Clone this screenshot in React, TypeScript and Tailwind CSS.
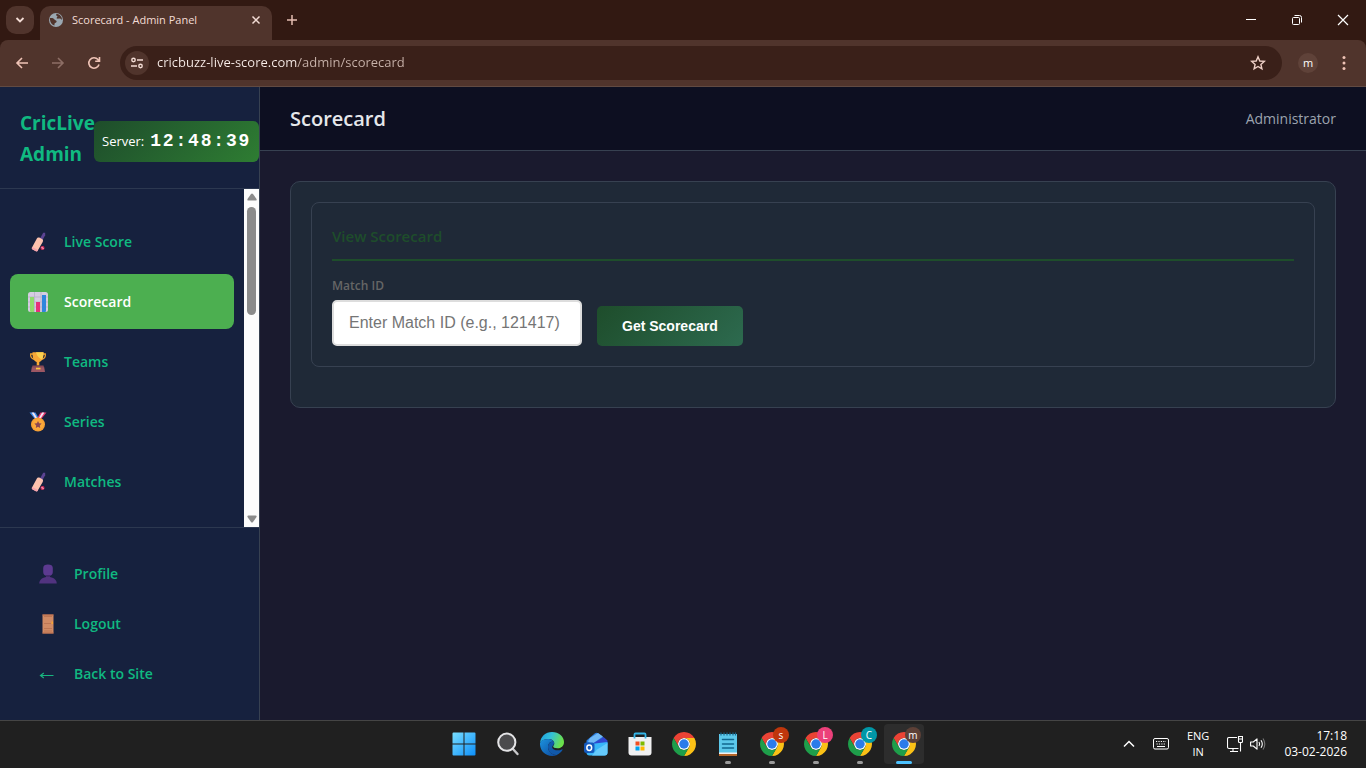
import { useState } from 'react';
import type { ReactNode } from 'react';

type NavItem = { label: string; href: string; icon: ReactNode };

const BatIcon = () => (
  <svg viewBox="0 0 20 20" className="w-5 h-5">
    <path d="M12 6.500 15.200.8h2v2.400L14.500 8z" fill="#5b4391" />
    <path d="M8.600 7c.8-1.500 2-1.800 3.200-1.200l2.200 1.200c1.200.7 1.300 1.800.7 2.900l-4.900 8.600c-.5.9-1.200 1-2 .6l-3.200-1.700c-.9-.5-1-1.200-.6-2z" fill="#fcc2ae" />
    <path d="m4.200 15 5.900 3-.4.700c-.5.8-1.200.9-2 .5l-3.100-1.700c-.9-.5-1-1.300-.4-2.500z" fill="#f6a3ad" />
    <circle cx="14.500" cy="16" r="2" fill="#d9305f" />
    <path d="m13.600 15 1.900 2" stroke="#ffd5de" strokeWidth=".9" />
  </svg>
);

const ChartIcon = () => (
  <svg viewBox="0 0 20 20" className="w-5 h-5">
    <rect width="20" height="20" rx="2.500" fill="#d5cde0" />
    <path d="M0 5h20M0 10h20M0 15h20M6.500 0v20M13 0v20" stroke="#b9afc9" strokeWidth=".8" />
    <path d="M2 5h4v15H3a1 1 0 0 1-1-1z" fill="#8fdc6c" />
    <path d="M8 10h4v10H8z" fill="#e8307a" />
    <path d="M14 3h4v16a1 1 0 0 1-1 1h-3z" fill="#2f86dd" />
  </svg>
);

const TrophyIcon = () => (
  <svg viewBox="0 0 20 20" className="w-5 h-5">
    <path d="M5.500 2H2.700c-.5 3 1 5 4 5.500M14.500 2h2.800c.5 3-1 5-4 5.500" fill="none" stroke="#f5a32c" strokeWidth="1.300" />
    <path d="M4.500.3h11c.2 5-1 8.800-4.200 9.700v3.500H8.700V10C5.500 9.100 4.300 5.300 4.500.3z" fill="#f9a836" />
    <path d="M8 .3h7.500c0 3-.5 5.500-1.500 7.200C12 6.800 9 4.800 8 .3z" fill="#fcd14f" />
    <path d="M4.500 13.500h11l.7 2.200H3.800z" fill="#8a4a55" />
    <path d="M3.800 15.200h12.400l.8 4.800H3z" fill="#9c5763" />
    <rect x="8" y="15.700" width="4.500" height="1.700" fill="#fbc441" />
  </svg>
);

const MedalIcon = () => (
  <svg viewBox="0 0 20 20" className="w-5 h-5">
    <path d="M1.500.5h6l4 7-3.500 1z" fill="#3d8de8" />
    <path d="M18.500.5h-6l-4 7 3.500 1z" fill="#e83c72" />
    <path d="M3.600.5h2.300l4.100 7-1.500.8zM16.400.5h-2.300L10 7.500l1.500.8z" fill="#f4e4f3" />
    <circle cx="10" cy="12.500" r="7" fill="#f6a035" />
    <circle cx="10" cy="12.500" r="5.400" fill="#fba93a" />
    <path d="m10 9 1.100 2.300 2.500.3-1.800 1.800.4 2.500L10 14.700l-2.200 1.200.4-2.500-1.800-1.800 2.500-.3z" fill="#8a4753" />
  </svg>
);

const PersonIcon = () => (
  <svg viewBox="0 0 20 20" className="w-5 h-5">
    <path d="M5.200 4c0-2.500 1.800-3.500 4.800-3.500s4.800 1 4.800 3.500v4c0 2.500-1.600 4-4.800 4s-4.800-1.500-4.800-4z" fill="#5c3a90" />
    <path d="M8 11h4v2.500H8z" fill="#432a6d" />
    <path d="M1.200 19.500c.3-4 3.300-6.500 8.800-6.500s8.500 2.500 8.800 6.500z" fill="#51337f" />
  </svg>
);

const DoorIcon = () => (
  <svg viewBox="0 0 20 20" className="w-5 h-5">
    <path d="M4.500.5h11v19h-11z" fill="#d18b65" />
    <path d="M4.500.5h11v1h-11zM4.500 18.500h11v1h-11z" fill="#b86a4b" />
    <path d="M6 2.500h8M6 9.500h7M6 14.500h8M6 17h8" stroke="#b56d4e" strokeWidth=".7" />
    <path d="M13.500 7.500h1.500v2.500h-1.500z" fill="#f8a432" />
  </svg>
);

const ArrowIcon = () => (
  <svg viewBox="0 0 20 20" className="w-5 h-5" fill="none" stroke="#18b57f" strokeWidth="1.200">
    <path d="M2.500 11.500h13M5.800 9 2.500 11.500 5.800 14" />
  </svg>
);

const ChromeIcon = () => (
  <svg viewBox="0 0 48 48" className="w-6 h-6">
    <circle cx="24" cy="24" r="12" fill="#fff" />
    <path d="M24 12h20.780A24 24 0 0 0 3.220 12l10.390 18A12 12 0 0 1 24 12z" fill="#ea4335" />
    <path d="M34.390 30 24 48a24 24 0 0 0 20.780-36H24a12 12 0 0 1 10.390 18z" fill="#fbc116" />
    <path d="M13.610 30 3.220 12A24 24 0 0 0 24 48l10.390-18a12 12 0 0 1-20.780 0z" fill="#1e9e4a" />
    <circle cx="24" cy="24" r="9.500" fill="#2b7bea" />
  </svg>
);

const WindowsIcon = () => (
  <svg viewBox="0 0 24 24" className="w-6 h-6">
    <defs>
      <linearGradient id="win" gradientUnits="userSpaceOnUse" x1="0" y1="0" x2="24" y2="24">
        <stop stopColor="#7be0ff" />
        <stop offset="1" stopColor="#0a8dfa" />
      </linearGradient>
    </defs>
    <path d="M.5 1.500q0-1 1-1h10v11H.5zM12.500.5h10q1 0 1 1v10h-11zM.5 12.500h11v11h-10q-1 0-1-1zM12.500 12.500h11v10q0 1-1 1h-10z" fill="url(#win)" />
  </svg>
);

const TaskSearchIcon = () => (
  <svg viewBox="0 0 24 24" className="w-6 h-6">
    <path d="m16.500 16.500 5 5.500" stroke="#c9c9cb" strokeWidth="2.400" strokeLinecap="round" />
    <circle cx="10.800" cy="10.200" r="8.600" fill="#4b4b4d" stroke="#e4e4e6" strokeWidth="2" />
  </svg>
);

const EdgeIcon = () => (
  <svg viewBox="0 0 24 24" className="w-6 h-6">
    <defs>
      <linearGradient id="edgeTop" x1="0" y1="0" x2="1" y2=".3">
        <stop stopColor="#1b9de2" />
        <stop offset=".5" stopColor="#34c1d8" />
        <stop offset="1" stopColor="#6be04b" />
      </linearGradient>
      <linearGradient id="edgeLow" x1="0" y1="0" x2="1" y2="1">
        <stop stopColor="#1c93de" />
        <stop offset="1" stopColor="#0c479d" />
      </linearGradient>
    </defs>
    <path d="M0 11C.6 4.600 5.500 0 12 0c7 0 12 4.600 12 10 0 4-3 6.300-6.500 6.300-3 0-4.500-1-4.300-2 .1-.6 1.100-1 1.100-2.800C14.300 9 12 7 8.500 7 4 7 1 9 0 11z" fill="url(#edgeTop)" />
    <path d="M0 11c1-2.500 4-4 8.500-4 3 0 4.900 1.500 5.500 3-3.500-1-6 1.500-6 5 0 4.500 4 8 9 8a12 12 0 0 1-5 1C5 24-.5 18.500 0 11z" fill="url(#edgeLow)" />
    <path d="M14 10c-3.500-1-6 1.500-6 5 0 4.500 4 8.300 8.700 8 2.600-1.200 4.600-2.800 5.800-5 .3-.6-.2-.9-.8-.6-1.200.6-2.600.9-4.200.9-4.800 0-6.500-3-4.300-5.300.7-.8 1-1.700.8-3z" fill="#1159ab" />
  </svg>
);

const OutlookIcon = () => (
  <svg viewBox="0 0 24 24" className="w-6 h-6">
    <path d="M2.500 8.500 11 1.300q1.500-1.100 3 0l8.500 7V12l-10 6-10-6z" fill="#2b7de0" />
    <path d="M6 6 14 1l5 3.600L8 12 4 9.500z" fill="#6fb8f6" />
    <path d="M9 11.500 19.500 5l4 3.500v4L13 18z" fill="#3147ce" />
    <path d="M2.500 12.500 23.500 10v10.500q0 3-3 3h-15q-3 0-3-3z" fill="#38b6f8" />
    <path d="m13 17.500 10.500-6.500v9.500q0 3-3 3H8z" fill="#65cafc" />
    <rect y="10.500" width="10.500" height="10.500" rx="2.200" fill="#1459bd" />
    <ellipse cx="5.250" cy="15.750" rx="2.400" ry="2.700" fill="none" stroke="#fff" strokeWidth="1.500" />
  </svg>
);

const StoreIcon = () => (
  <svg viewBox="0 0 24 24" className="w-6 h-6">
    <path d="M.5 5h23v15.500q0 3-3 3h-17q-3 0-3-3z" fill="#f0f0f1" />
    <path d="M6.500 6.500V2.500q0-1 1-1h9q1 0 1 1v4" fill="none" stroke="#35b6e8" strokeWidth="1.800" />
    <path d="M7.500 9.500h4v4h-4z" fill="#f25022" />
    <path d="M12.500 9.500h4v4h-4z" fill="#7fba00" />
    <path d="M7.500 14.500h4v4h-4z" fill="#00a4ef" />
    <path d="M12.500 14.500h4v4h-4z" fill="#ffb900" />
  </svg>
);

const NotepadIcon = () => (
  <svg viewBox="0 0 24 24" className="w-6 h-6">
    <path d="M3 2h18v19H3z" fill="#5cc8ea" />
    <path d="M3 20.500h18v1.500H3z" fill="#f2f2f2" />
    <path d="M3 22h18v2H3z" fill="#b5672b" />
    <path d="M5 .5v3M8 .5v3M11 .5v3M14 .5v3M17 .5v3M19.500 .5v3" stroke="#17668c" strokeWidth="1.200" />
    <path d="M6.500 7.500h11M6.500 12h11M6.500 16h11" stroke="#11678f" strokeWidth="1.500" strokeLinecap="round" />
  </svg>
);

const navItems: NavItem[] = [
  { label: 'Live Score', href: '#live-score', icon: <BatIcon /> },
  { label: 'Scorecard', href: '#scorecard', icon: <ChartIcon /> },
  { label: 'Teams', href: '#teams', icon: <TrophyIcon /> },
  { label: 'Series', href: '#series', icon: <MedalIcon /> },
  { label: 'Matches', href: '#matches', icon: <BatIcon /> },
];

const footerItems: NavItem[] = [
  { label: 'Profile', href: '#profile', icon: <PersonIcon /> },
  { label: 'Logout', href: '#logout', icon: <DoorIcon /> },
  { label: 'Back to Site', href: '#site', icon: <ArrowIcon /> },
];

type TaskApp = { name: string; icon: ReactNode; badge?: string; badgeClass?: string; running?: boolean; active?: boolean };

const taskApps: TaskApp[] = [
  { name: 'Start', icon: <WindowsIcon /> },
  { name: 'Search', icon: <TaskSearchIcon /> },
  { name: 'Edge', icon: <EdgeIcon /> },
  { name: 'Outlook', icon: <OutlookIcon /> },
  { name: 'Store', icon: <StoreIcon /> },
  { name: 'Chrome', icon: <ChromeIcon /> },
  { name: 'Notepad', icon: <NotepadIcon />, running: true },
  { name: 'Chrome s', icon: <ChromeIcon />, badge: 's', badgeClass: 'bg-[#bf360c]', running: true },
  { name: 'Chrome L', icon: <ChromeIcon />, badge: 'L', badgeClass: 'bg-[#ec407a]', running: true },
  { name: 'Chrome C', icon: <ChromeIcon />, badge: 'C', badgeClass: 'bg-[#0097a7]', running: true },
  { name: 'Chrome m', icon: <ChromeIcon />, badge: 'm', badgeClass: 'bg-[#5d4037]', running: true, active: true },
];

function BrowserBar() {
  return (
    <header className="shrink-0 bg-[#321912] text-[#f3dcd5]">
      <div className="flex h-10 items-center">
        <button aria-label="Search tabs" className="ml-1.5 flex h-7 w-7 items-center justify-center rounded-[10px] bg-[#50342c]">
          <svg viewBox="0 0 12 12" className="h-3 w-3" fill="none" stroke="currentColor" strokeWidth="1.800">
            <path d="m2.500 4 3.500 3.500L9.500 4" />
          </svg>
        </button>
        <div className="ml-1.5 flex h-[34px] w-[232px] items-center self-end rounded-t-[10px] bg-[#50342c] px-2 pb-1.5">
          <svg viewBox="0 0 16 16" className="h-4 w-4 shrink-0">
            <circle cx="8" cy="8" r="7" fill="#9aa7b1" />
            <path d="M2 6c2.500-.3 4 .3 4.500 1.500.4 1 1.500.7 2 1.600.5 1-.5 1.700-1.500 1.900-.6.300-.5 1.500-.6 2.500C3.500 12.700 1.700 9.500 2 6zM8.500 1.700C7.800 3 8 3.800 9.400 4c.2 1.300-.9 1.500-.9 2.300 1.500.9 3-.3 4.500.7l1 1c.2-3-2-6-5.500-6.300z" fill="#50342c" />
          </svg>
          <span className="ml-2 text-[11px]">Scorecard - Admin Panel</span>
          <button aria-label="Close tab" className="ml-auto flex h-4 w-4 items-center justify-center">
            <svg viewBox="0 0 10 10" className="h-2.5 w-2.5" stroke="currentColor" strokeWidth="1.500">
              <path d="m1.500 1.500 7 7m0-7-7 7" />
            </svg>
          </button>
        </div>
        <button aria-label="New tab" className="ml-3.5 text-[#e5bdb1]">
          <svg viewBox="0 0 12 12" className="h-3 w-3" stroke="currentColor" strokeWidth="1.500">
            <path d="M6 1v10M1 6h10" />
          </svg>
        </button>
        <div className="ml-auto flex text-white">
          <button aria-label="Minimize" className="flex h-10 w-[46px] items-center justify-center">
            <svg viewBox="0 0 12 12" className="h-3 w-3" stroke="currentColor">
              <path d="M1 5.500h10" />
            </svg>
          </button>
          <button aria-label="Restore" className="flex h-10 w-[46px] items-center justify-center">
            <svg viewBox="0 0 12 12" className="h-3 w-3" fill="none" stroke="currentColor">
              <rect x="1.500" y="3.500" width="7" height="7" rx="1" />
              <path d="M3.500 1.500h5q2 0 2 2v5" />
            </svg>
          </button>
          <button aria-label="Close window" className="flex h-10 w-[46px] items-center justify-center">
            <svg viewBox="0 0 12 12" className="h-3 w-3" stroke="currentColor" strokeWidth="1.200">
              <path d="m1 1 10 10m0-10L1 11" />
            </svg>
          </button>
        </div>
      </div>

      <div className="flex h-[47px] items-center rounded-t-lg border-b border-[#614a42] bg-[#50342c] px-3.5 text-[#efc3b6]">
        <button aria-label="Back">
          <svg viewBox="0 0 16 16" className="h-4 w-4" fill="none" stroke="currentColor" strokeWidth="1.600">
            <path d="M14 8H3m5-5L3 8l5 5" />
          </svg>
        </button>
        <button aria-label="Forward" className="ml-5 text-[#8d6e65]">
          <svg viewBox="0 0 16 16" className="h-4 w-4" fill="none" stroke="currentColor" strokeWidth="1.600">
            <path d="M2 8h11M8 3l5 5-5 5" />
          </svg>
        </button>
        <button aria-label="Reload" className="ml-5">
          <svg viewBox="0 0 16 16" className="h-4 w-4" fill="none" stroke="currentColor" strokeWidth="1.600">
            <path d="M13 9.500A5.200 5.200 0 1 1 12 4.600l1.300 1.400M13.500 2v4.300H9.200" />
          </svg>
        </button>
        <div className="ml-[18px] flex h-[34px] flex-1 items-center rounded-full bg-[#3a2019] pr-4 pl-[5px]">
          <button aria-label="Site information" className="flex h-6 w-6 items-center justify-center rounded-full bg-[#50342c] text-[#f3dcd5]">
            <svg viewBox="0 0 14 14" className="h-3.5 w-3.5" fill="none" stroke="currentColor" strokeWidth="1.400">
              <circle cx="3.500" cy="4" r="1.700" />
              <path d="M7 4h6M1 10h6" />
              <circle cx="10.500" cy="10" r="1.700" />
            </svg>
          </button>
          {/* the path part after the domain is dimmed */}
          <input
            aria-label="Address"
            type="text"
            defaultValue="cricbuzz-live-score.com/admin/scorecard"
            className="ml-2 min-w-0 flex-1 bg-linear-to-r from-[#faeeea] from-[140px] to-[#c9b3ab] to-[140px] bg-clip-text text-[13px] text-transparent outline-none"
          />
          <button aria-label="Bookmark this tab" className="ml-4 text-[#efd0c7]">
            <svg viewBox="0 0 16 16" className="h-4 w-4" fill="none" stroke="currentColor" strokeWidth="1.400">
              <path d="m8 1.800 1.800 4.200 4.500.4-3.400 3 1 4.500L8 11.500l-3.900 2.400 1-4.500-3.400-3 4.500-.4z" />
            </svg>
          </button>
        </div>
        <button className="ml-4 flex h-5 w-5 items-center justify-center rounded-full bg-[#5f4239] text-[11px] text-white">m</button>
        <button aria-label="Menu" className="ml-[18px]">
          <svg viewBox="0 0 16 16" className="h-4 w-4" fill="currentColor">
            <circle cx="8" cy="2.500" r="1.500" />
            <circle cx="8" cy="8" r="1.500" />
            <circle cx="8" cy="13.500" r="1.500" />
          </svg>
        </button>
      </div>
    </header>
  );
}

function Sidebar() {
  return (
    <aside className="flex w-[260px] shrink-0 flex-col border-r border-[#374151] bg-[#16213e] text-sm font-semibold text-[#10b981]">
      <div className="flex items-center border-b border-[#2c3850] pt-[21px] pb-[18px] pl-5">
        <h2 className="w-[74px] shrink-0 text-[19px] leading-[31px] font-bold">CricLive Admin</h2>
        <div className="mt-1 flex h-[41px] flex-1 items-center gap-1.5 rounded-md bg-linear-135 from-[#1e4d2b] to-[#2e7d32] pl-2 whitespace-nowrap text-white">
          <span className="text-[13px] font-normal">Server:</span>
          <span className="font-['Liberation_Mono',monospace] text-lg font-bold tracking-widest">12:48:39</span>
        </div>
      </div>

      <div className="flex min-h-0 flex-1">
        <nav className="flex flex-1 flex-col gap-[5px] overflow-hidden px-2.5 pt-[25px]">
          {navItems.map((item) => (
            <a
              key={item.label}
              href={item.href}
              className={`flex h-[55px] shrink-0 items-center gap-4 rounded-lg px-[18px] ${
                item.label === 'Scorecard' ? 'bg-[#4caf50] text-white' : ''
              }`}
            >
              {item.icon}
              <span>{item.label}</span>
            </a>
          ))}
        </nav>
        <div className="flex w-[15px] flex-col items-center bg-[#fcfcfc] py-1 text-[#8b8b8b]">
          <svg viewBox="0 0 10 8" className="h-2 w-2.5" fill="currentColor">
            <path d="M4 1q1-1 2 0l3.500 5q.5 1.500-1 1.500h-7q-1.500 0-1-1.500z" />
          </svg>
          <div className="mt-1.5 h-[108px] w-[9px] rounded-full bg-current" />
          <svg viewBox="0 0 10 8" className="mt-auto h-2 w-2.5" fill="currentColor">
            <path d="M4 7q1 1 2 0l3.500-5q.5-1.500-1-1.500h-7q-1.500 0-1 1.500z" />
          </svg>
        </div>
      </div>

      <div className="flex flex-col border-t border-[#2c3850] px-5 py-[21px]">
        {footerItems.map((item) => (
          <a key={item.label} href={item.href} className="flex h-[50px] items-center gap-4 px-[18px]">
            {item.icon}
            <span>{item.label}</span>
          </a>
        ))}
      </div>
    </aside>
  );
}

function Taskbar() {
  return (
    <footer className="grid h-12 shrink-0 grid-cols-[1fr_auto_1fr] items-center border-t border-[#454545] bg-[#202020] pb-px pl-0.5 text-white">
      <div />
      <div className="flex gap-1">
        {taskApps.map((app) => (
          <button
            key={app.name}
            aria-label={app.name}
            className={`relative flex h-10 w-10 items-center justify-center rounded ${app.active ? 'bg-[#2d2d2d]' : ''}`}
          >
            {app.icon}
            {app.badge && (
              <span
                className={`absolute top-[3px] right-[3px] flex h-4 w-4 items-center justify-center rounded-full text-[10px] leading-none ${app.badgeClass}`}
              >
                {app.badge}
              </span>
            )}
            {app.running && (
              <span
                className={`absolute bottom-0 h-[3px] rounded-full ${app.active ? 'w-4 bg-[#4cc2ff]' : 'w-1.5 bg-[#9a9a9a]'}`}
              />
            )}
          </button>
        ))}
      </div>
      <div className="flex items-center justify-end pr-[19px] text-xs leading-4">
        <button aria-label="Show hidden icons">
          <svg viewBox="0 0 12 12" className="h-3 w-3" fill="none" stroke="currentColor" strokeWidth="1.500">
            <path d="m1 8.500 5-5 5 5" />
          </svg>
        </button>
        <button aria-label="Touch keyboard" className="ml-[18px]">
          <svg viewBox="0 0 16 12" className="h-3 w-4" fill="none" stroke="currentColor">
            <rect x=".5" y=".5" width="15" height="10.500" rx="1.500" />
            <path d="M3 3.500h10M3.500 6h9" strokeDasharray="1.200 1.200" />
            <path d="M4 8.500h8" />
          </svg>
        </button>
        <button className="ml-[18px] text-center text-[11px] leading-4">
          ENG
          <br />
          IN
        </button>
        <button aria-label="Network" className="ml-[18px]">
          <svg viewBox="0 0 16 16" className="h-4 w-4" fill="none" stroke="currentColor" strokeWidth="1.100">
            <path d="M10 1.500H2Q.5 1.500.5 3v8Q.5 12.500 2 12.500h9.500M6 12.500v3M3 15.500h8" />
            <path d="M11.500 .5h4v5q0 1-1 1h-2q-1 0-1-1zM11.500 3h4M13.500 6.500v9" />
          </svg>
        </button>
        <button aria-label="Volume" className="ml-[7px]">
          <svg viewBox="0 0 16 16" className="h-4 w-4" fill="none" stroke="currentColor" strokeWidth="1.100">
            <path d="M.6 6h2.700L7 2.800v10.400L3.300 10H.6z" strokeLinejoin="round" />
            <path d="M9 6q1.300 2 0 4M11 4.200q2.600 3.800 0 7.600" />
            <path d="M13 2.500q3.600 5.500 0 11" stroke="#777" />
          </svg>
        </button>
        <button className="ml-[18px] text-right">
          17:18
          <br />
          03-02-2026
        </button>
      </div>
    </footer>
  );
}

export default function App() {
  const [matchId, setMatchId] = useState('');

  return (
    <div className="flex h-screen flex-col bg-[#1a1a2e] font-['Open_Sans','Noto_Sans',sans-serif]">
      <BrowserBar />

      <div className="flex min-h-0 flex-1">
        <Sidebar />

        <main className="min-w-0 flex-1">
          <div className="flex h-16 items-center justify-between border-b border-[#374151] bg-[#0d0f21] px-[30px]">
            <h1 className="text-xl font-semibold text-[#e5e7eb]">Scorecard</h1>
            <span className="text-sm text-[#9ca3af]">Administrator</span>
          </div>

          <div className="p-[30px]">
            <section className="rounded-[10px] border border-[#374151] bg-[#1f2937] p-5 pb-10">
              <form
                className="rounded-lg border border-[#374151] p-5"
                onSubmit={(e) => e.preventDefault()}
              >
                <h3 className="border-b-2 border-[#1e4d2b] pt-px pb-[11px] text-[15px] leading-6 font-semibold text-[#1e4d2b]">
                  View Scorecard
                </h3>
                <div className="mt-[15px] flex items-end gap-[15px]">
                  <div className="w-[250px]">
                    <label htmlFor="matchId" className="block pb-[5px] text-xs leading-[19px] font-semibold text-[#666]">
                      Match ID
                    </label>
                    <input
                      id="matchId"
                      type="text"
                      value={matchId}
                      onChange={(e) => setMatchId(e.target.value)}
                      placeholder="Enter Match ID (e.g., 121417)"
                      className="block h-[46px] w-full rounded-[5px] border-2 border-[#ddd] bg-white px-[15px] font-['Liberation_Sans',sans-serif] text-base text-black placeholder:text-[#757575]"
                    />
                  </div>
                  <button
                    type="submit"
                    className="h-10 rounded-[5px] bg-linear-135 from-[#1e4d2b] to-[#2d6a4f] px-[25px] font-['Liberation_Sans',sans-serif] text-sm font-bold text-white"
                  >
                    Get Scorecard
                  </button>
                </div>
              </form>
            </section>
          </div>
        </main>
      </div>

      <Taskbar />
    </div>
  );
}
